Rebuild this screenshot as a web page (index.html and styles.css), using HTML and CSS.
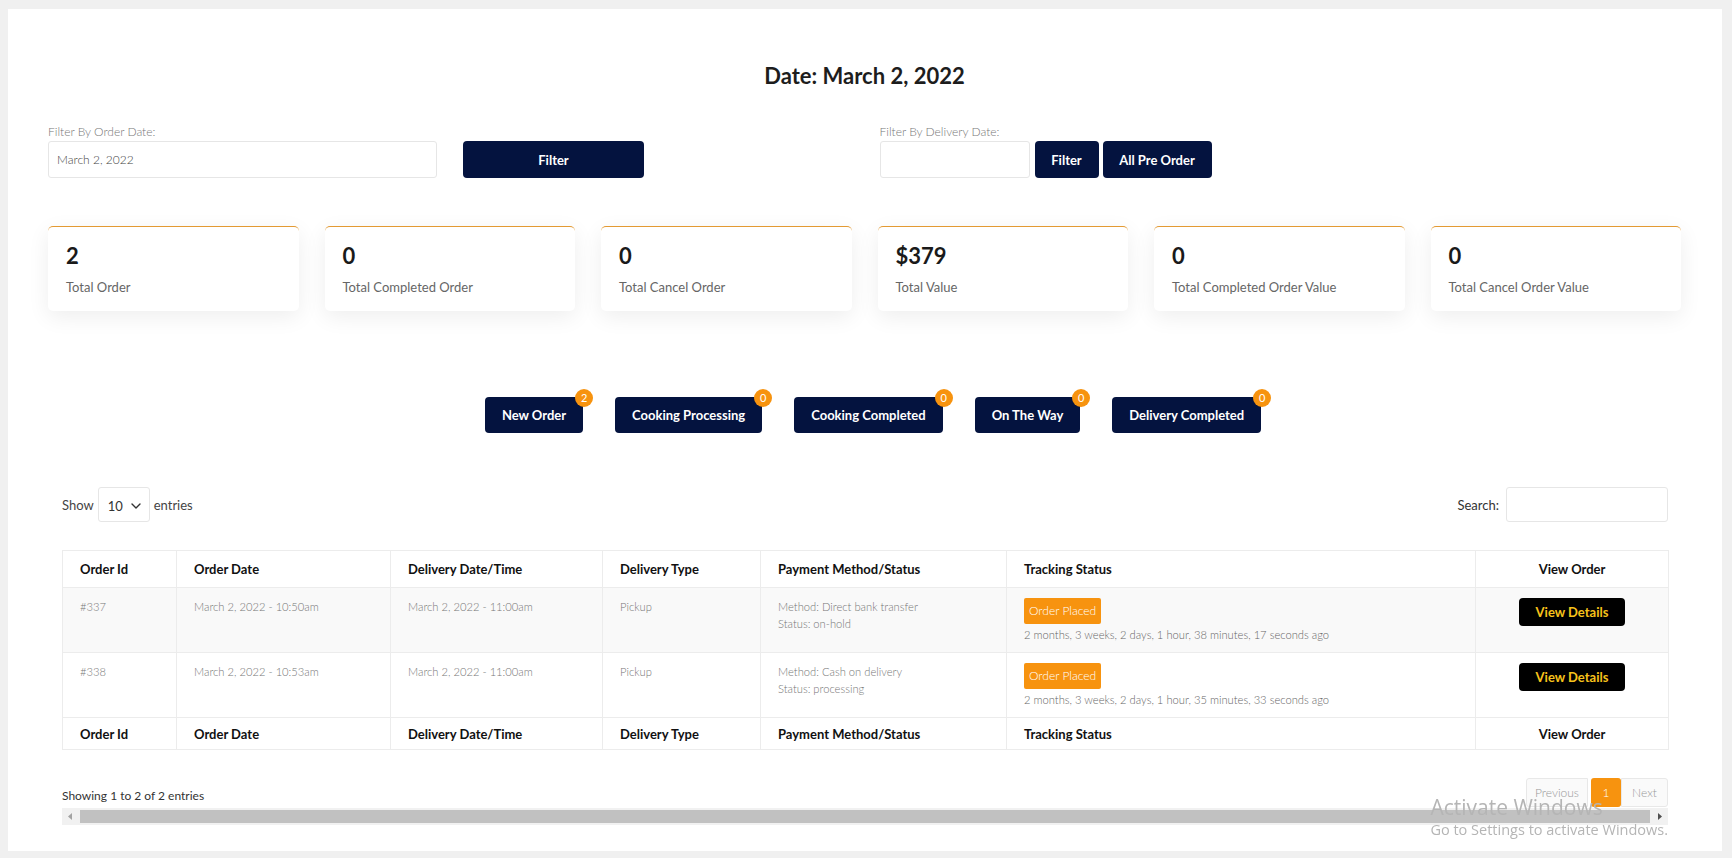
FILE: index.html
```html
<!DOCTYPE html>
<html>
<head>
<meta charset="utf-8">
<title>Orders</title>
<link rel="stylesheet" href="styles.css">
</head>
<body>
<div class="panel">
  <h2 class="title">Date: March 2, 2022</h2>

  <div class="filters">
    <div class="filter-col">
      <label class="flabel">Filter By Order Date:</label>
      <div class="frow">
        <input class="finput finput-lg" value="March 2, 2022" readonly>
        <button class="btn btn-wide">Filter</button>
      </div>
    </div>
    <div class="filter-col">
      <label class="flabel">Filter By Delivery Date:</label>
      <div class="frow">
        <input class="finput finput-sm" value="" readonly>
        <button class="btn btn-sm">Filter</button>
        <button class="btn btn-md">All Pre Order</button>
      </div>
    </div>
  </div>

  <div class="cards">
    <div class="card"><div class="card-num">2</div><div class="card-label">Total Order</div></div>
    <div class="card"><div class="card-num">0</div><div class="card-label">Total Completed Order</div></div>
    <div class="card"><div class="card-num">0</div><div class="card-label">Total Cancel Order</div></div>
    <div class="card"><div class="card-num">$379</div><div class="card-label">Total Value</div></div>
    <div class="card"><div class="card-num">0</div><div class="card-label">Total Completed Order Value</div></div>
    <div class="card"><div class="card-num">0</div><div class="card-label">Total Cancel Order Value</div></div>
  </div>

  <div class="statuses">
    <button class="sbtn">New Order<span class="badge">2</span></button>
    <button class="sbtn">Cooking Processing<span class="badge">0</span></button>
    <button class="sbtn">Cooking Completed<span class="badge">0</span></button>
    <button class="sbtn">On The Way<span class="badge">0</span></button>
    <button class="sbtn">Delivery Completed<span class="badge">0</span></button>
  </div>

  <div class="dt">
    <div class="dt-top">
      <div class="dt-length">
        <span>Show</span>
        <div class="select"><span>10</span>
          <svg class="chev" width="10" height="6" viewBox="0 0 10 6"><path d="M1 1l4 4 4-4" fill="none" stroke="#333" stroke-width="1.4" stroke-linecap="round" stroke-linejoin="round"/></svg>
        </div>
        <span>entries</span>
      </div>
      <div class="dt-search">
        <span>Search:</span>
        <div class="sinput"></div>
      </div>
    </div>

    <table class="orders">
      <colgroup>
        <col class="c1"><col class="c2"><col class="c3"><col class="c4"><col class="c5"><col class="c6"><col class="c7">
      </colgroup>
      <thead>
        <tr>
          <th>Order Id</th><th>Order Date</th><th>Delivery Date/Time</th><th>Delivery Type</th><th>Payment Method/Status</th><th>Tracking Status</th><th class="center">View Order</th>
        </tr>
      </thead>
      <tbody>
        <tr class="odd">
          <td>#337</td>
          <td>March 2, 2022 - 10:50am</td>
          <td>March 2, 2022 - 11:00am</td>
          <td>Pickup</td>
          <td>Method: Direct bank transfer<br>Status: on-hold</td>
          <td class="track"><span class="tag">Order Placed</span><div class="ago">2 months, 3 weeks, 2 days, 1 hour, 38 minutes, 17 seconds ago</div></td>
          <td class="view"><span class="vbtn">View Details</span></td>
        </tr>
        <tr>
          <td>#338</td>
          <td>March 2, 2022 - 10:53am</td>
          <td>March 2, 2022 - 11:00am</td>
          <td>Pickup</td>
          <td>Method: Cash on delivery<br>Status: processing</td>
          <td class="track"><span class="tag">Order Placed</span><div class="ago">2 months, 3 weeks, 2 days, 1 hour, 35 minutes, 33 seconds ago</div></td>
          <td class="view"><span class="vbtn">View Details</span></td>
        </tr>
      </tbody>
      <tfoot>
        <tr>
          <th>Order Id</th><th>Order Date</th><th>Delivery Date/Time</th><th>Delivery Type</th><th>Payment Method/Status</th><th>Tracking Status</th><th class="center">View Order</th>
        </tr>
      </tfoot>
    </table>

    <div class="dt-bottom">
      <div class="dt-info">Showing 1 to 2 of 2 entries</div>
      <div class="pager">
        <span class="pg pg-prev">Previous</span>
        <span class="pg pg-cur">1</span>
        <span class="pg pg-next">Next</span>
      </div>
    </div>

    <div class="hscroll">
      <div class="sarrow">
        <svg width="17" height="17" viewBox="0 0 17 17"><path d="M10 5v7L6 8.5z" fill="#a3a3a3"/></svg>
      </div>
      <div class="sthumb"></div>
      <div class="sarrow">
        <svg width="17" height="17" viewBox="0 0 17 17"><path d="M7 5v7l4-3.5z" fill="#505050"/></svg>
      </div>
    </div>
  </div>
</div>

<div class="watermark">
  <div class="wm1">Activate Windows</div>
  <div class="wm2">Go to Settings to activate Windows.</div>
</div>
</body>
</html>
```

FILE: styles.css
```css
* { box-sizing: border-box; }

body {
  margin: 0;
  background: #f0f0f0;
  font-family: Lato, "Liberation Sans", sans-serif;
  color: #333;
}

.panel {
  margin: 9px 10px 7px 8px;
  height: 842px;
  background: #fff;
  padding: 52px 41px 0 40px;
}

.title {
  margin: 0;
  text-align: center;
  font-size: 22px;
  line-height: 30px;
  font-weight: 700;
  color: #1d1d1d;
}

/* filters */
.filters {
  display: grid;
  grid-template-columns: 1fr 1fr;
  column-gap: 30px;
  margin-top: 33px;
}

.flabel {
  display: block;
  font-size: 12px;
  line-height: 16px;
  font-weight: 300;
  color: #777;
}

.frow {
  display: flex;
  margin-top: 1px;
}

.finput {
  height: 37px;
  border: 1px solid #e6e6e6;
  border-radius: 3px;
  padding: 0 8px;
  font-family: Lato, "Liberation Sans", sans-serif;
  font-size: 12px;
  font-weight: 300;
  color: #444;
  outline: none;
  background: #fff;
}

.finput-lg { width: 389px; }
.finput-sm { width: 150px; }

.btn {
  height: 37px;
  border: 0;
  border-radius: 4px;
  background: #04133f;
  color: #fff;
  font-family: Lato, "Liberation Sans", sans-serif;
  font-size: 13px;
  font-weight: 700;
  padding: 0;
}

.btn-wide { width: 181px; margin-left: 26px; }
.btn-sm { width: 64px; margin-left: 5px; }
.btn-md { width: 109px; margin-left: 4px; }

/* cards */
.cards {
  display: grid;
  grid-template-columns: repeat(6, 1fr);
  column-gap: 26px;
  margin-top: 48px;
}

.card {
  height: 85px;
  border-top: 1px solid #e39a33;
  border-radius: 5px;
  background: #fff;
  box-shadow: 0 6px 22px rgba(0, 0, 0, 0.07);
  padding: 16px 18px 0;
}

.card-num {
  font-size: 22px;
  line-height: 26px;
  font-weight: 700;
  color: #1a1a1a;
}

.card-label {
  margin-top: 9px;
  font-size: 13px;
  line-height: 18px;
  color: #666;
}

/* status buttons */
.statuses {
  display: flex;
  justify-content: center;
  gap: 32px;
  margin-top: 86px;
  padding-left: 17px;
}

.sbtn {
  position: relative;
  height: 36px;
  padding: 0 17px;
  border: 0;
  border-radius: 4px;
  background: #04133f;
  color: #fff;
  font-family: Lato, "Liberation Sans", sans-serif;
  font-size: 13px;
  font-weight: 700;
}

.badge {
  position: absolute;
  top: -8px;
  right: -10px;
  width: 18px;
  height: 18px;
  border-radius: 50%;
  background: #f7930f;
  color: #fff;
  font-size: 11px;
  line-height: 18px;
  font-weight: 400;
  text-align: center;
}

/* data table */
.dt {
  margin: 54px 13px 0 14px;
}

.dt-top {
  display: flex;
  justify-content: space-between;
  align-items: center;
  height: 35px;
}

.dt-length {
  display: flex;
  align-items: center;
  gap: 4px;
  font-size: 13px;
  color: #444;
}

.select {
  width: 52px;
  height: 35px;
  border: 1px solid #e6e6e6;
  border-radius: 3px;
  display: flex;
  align-items: center;
  justify-content: space-between;
  padding: 2px 8px 0 9px;
  font-size: 13px;
  color: #333;
}

.dt-search {
  display: flex;
  align-items: center;
  gap: 7px;
  font-size: 13px;
  color: #333;
}

.sinput {
  width: 162px;
  height: 35px;
  border: 1px solid #e6e6e6;
  border-radius: 3px;
}

.orders {
  width: 1606px;
  margin-top: 28px;
  border-collapse: collapse;
  table-layout: fixed;
}

.c1 { width: 114px; }
.c2 { width: 214px; }
.c3 { width: 212px; }
.c4 { width: 158px; }
.c5 { width: 246px; }
.c6 { width: 469px; }
.c7 { width: 193px; }

.orders th,
.orders td {
  border: 1px solid #ececec;
}

.orders th {
  height: 37px;
  padding: 0 17px;
  text-align: left;
  font-size: 13px;
  font-weight: 700;
  color: #111;
}

.orders tfoot th {
  height: 32px;
}

.orders th.center { text-align: center; }

.orders td {
  height: 65px;
  vertical-align: top;
  padding: 10px 17px 0;
  font-size: 11.2px;
  line-height: 17px;
  font-weight: 300;
  color: #777;
}

.orders tr.odd td { background: #f9f9f9; }

.orders td.track { padding-top: 10px; }
.orders td.view { padding-top: 10px; text-align: center; }

.tag {
  display: inline-block;
  height: 26px;
  line-height: 26px;
  padding: 0 5px;
  border-radius: 2px;
  background: #f7930f;
  color: #fff;
  font-size: 12px;
  font-weight: 300;
}

.ago {
  margin-top: 2px;
  color: #666;
}

.vbtn {
  display: inline-block;
  width: 106px;
  height: 28px;
  line-height: 28px;
  border-radius: 4px;
  background: #000;
  color: #f7c21b;
  font-size: 13px;
  font-weight: 700;
}

.dt-bottom {
  display: flex;
  justify-content: space-between;
  align-items: flex-end;
  margin-top: 28px;
}

.dt-info {
  font-size: 12px;
  line-height: 16px;
  color: #333;
  margin-bottom: 3px;
}

.pager {
  display: flex;
  height: 29px;
}

.pg {
  display: flex;
  align-items: center;
  justify-content: center;
  font-size: 12px;
  font-weight: 300;
}

.pg-prev,
.pg-next {
  border: 1px solid #e8e8e8;
  background: #fafafa;
  color: #999;
}

.pg-prev { width: 62px; border-radius: 3px 0 0 3px; }
.pg-next { width: 47px; border-radius: 0 3px 3px 0; }

.pg-cur {
  width: 30px;
  margin-left: 3px;
  border-radius: 3px;
  background: #f7930f;
  color: #fff;
}

.hscroll {
  display: flex;
  height: 17px;
  margin-top: 1px;
  background: #f1f1f1;
}

.sarrow {
  width: 17px;
  height: 17px;
  flex: none;
}

.sarrow svg { display: block; }

.sthumb {
  flex: 1;
  margin: 2px 1px;
  background: #c1c1c1;
}

/* OS watermark overlay */
.watermark {
  position: fixed;
  top: 795px;
  right: 64px;
  font-family: "Open Sans", "Noto Sans", sans-serif;
  color: #b5b5b5;
}

.wm1 {
  font-size: 21px;
  line-height: 24px;
}

.wm2 {
  margin-top: 1px;
  font-size: 14.5px;
  line-height: 20px;
}
```
